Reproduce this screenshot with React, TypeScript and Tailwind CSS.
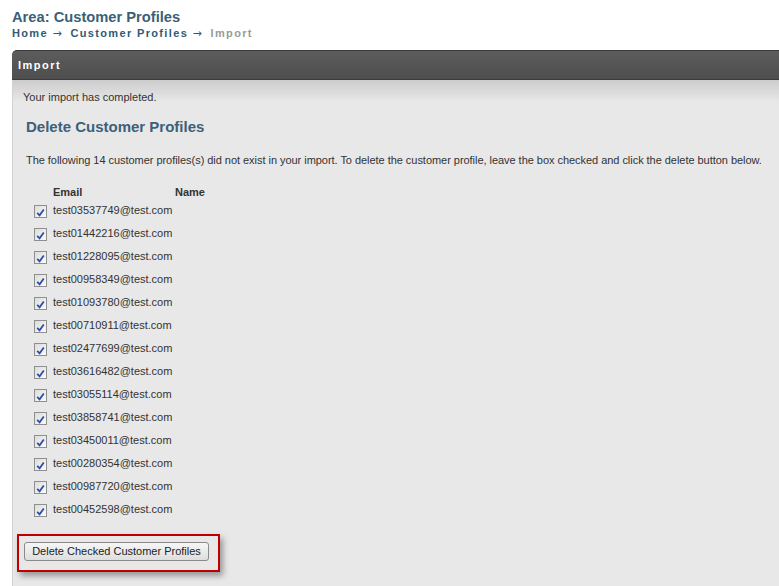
const emails = [
  'test03537749@test.com',
  'test01442216@test.com',
  'test01228095@test.com',
  'test00958349@test.com',
  'test01093780@test.com',
  'test00710911@test.com',
  'test02477699@test.com',
  'test03616482@test.com',
  'test03055114@test.com',
  'test03858741@test.com',
  'test03450011@test.com',
  'test00280354@test.com',
  'test00987720@test.com',
  'test00452598@test.com',
];

function CheckBox() {
  return (
    <span className="w-[13px] h-[13px] border border-[#8f8f8f] bg-gradient-to-br from-[#dcdcdc] to-[#fbfbfb] flex items-center justify-center shrink-0">
      <svg width="9" height="9" viewBox="0 0 9 9" className="mt-[1px]">
        <path d="M1.2 4.8 L3.6 7.3 L7.8 1.5" fill="none" stroke="#2b4fa8" strokeWidth="1.8" />
      </svg>
    </span>
  );
}

function Arrow() {
  return <span className="font-['DejaVu_Sans',sans-serif] font-normal tracking-normal text-[11px] leading-[14px]">→</span>;
}

export default function App() {
  return (
    <div className="w-[779px] h-[586px] overflow-hidden bg-white font-['Liberation_Sans',Arial,sans-serif] text-[11px] text-[#333]">
      <div className="pl-[12px] pt-[9px]">
        <h1 className="text-[14.7px] leading-[16px] font-bold text-[#3b5f77]">Area: Customer Profiles</h1>
        <div className="mt-[1px] h-[14px] overflow-hidden leading-[14px] font-bold tracking-[1.35px] text-[#2f5b74]">
          Home <Arrow />&nbsp; Customer Profiles <Arrow />&nbsp; <span className="text-[#9a9a9a]">Import</span>
        </div>
      </div>

      <div className="ml-[12px] mt-[10px] w-[800px]">
        <div className="h-[30px] rounded-tl-[5px] border-t border-b border-[#3a3a3a] bg-gradient-to-b from-[#5c5c5c] to-[#4e4e4e] flex items-center pl-[6px]">
          <span className="text-white font-bold tracking-[1.5px]">Import</span>
        </div>
        <div className="h-[520px] border-l border-[#d2d2d2] bg-[#e8e8e8] relative">
          <div className="absolute top-0 left-0 right-0 h-[22px] bg-gradient-to-b from-[#cccccc] to-[#e8e8e8]" />
          <div className="relative pt-[10px] pl-[10px] leading-[14px]">Your import has completed.</div>
          <div className="relative pl-[13px]">
            <h2 className="mt-[14px] text-[15px] leading-[18px] font-bold text-[#3d6079]">Delete Customer Profiles</h2>
            <p className="mt-[17px] leading-[14px] tracking-[-0.04px]">
              The following 14 customer profiles(s) did not exist in your import. To delete the customer profile, leave the box checked and click the delete button below.
            </p>
            <div className="mt-[18px] pl-[8px]">
              <div className="flex leading-[14px] font-bold">
                <span className="w-[19px]" />
                <span className="w-[122px]">Email</span>
                <span>Name</span>
              </div>
              {emails.map((e) => (
                <div key={e} className="h-[23px] flex items-center">
                  <span className="w-[19px] pt-[2px]">
                    <CheckBox />
                  </span>
                  <span>{e}</span>
                </div>
              ))}
            </div>
            <div className="mt-[13px] -ml-[9px] w-[203px] border-2 border-[#c00000] pl-[5px] pt-[6px] pb-[9px] shadow-[3px_4px_6px_rgba(0,0,0,0.35)]">
              <button className="w-[185px] h-[19px] rounded-[3px] border border-[#8a8a8a] bg-gradient-to-b from-[#f6f6f6] to-[#dedede] text-[11px] leading-[17px] text-[#222]">
                Delete Checked Customer Profiles
              </button>
            </div>
          </div>
        </div>
      </div>
    </div>
  );
}
